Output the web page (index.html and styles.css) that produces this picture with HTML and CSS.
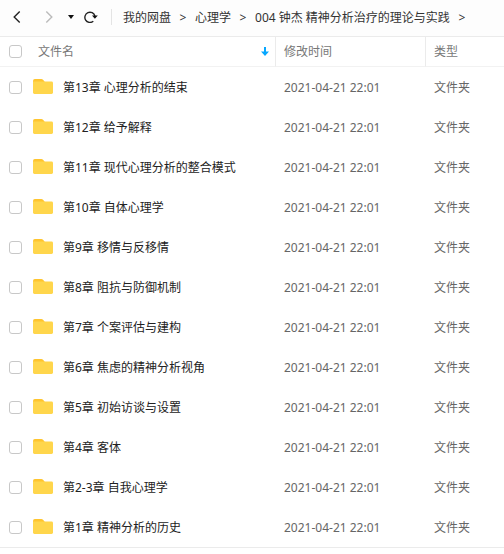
FILE: index.html
```
<!DOCTYPE html>
<html lang="zh-CN">
<head>
    <meta charset="UTF-8">
    <title>我的网盘</title>
    <link rel="stylesheet" href="styles.css">
</head>
<body>

    <!-- shared icons -->
    <svg class="sprite" aria-hidden="true">
        <symbol id="folder" viewBox="0 0 20 16">
            <path fill="#ffc52e" d="M0 2Q0 0 1.8 0H8.4Q9.4 0 10 .8L11.6 2.5V8H0Z"/>
            <path fill="#ffd64c" d="M0 2.5H18.6Q20 2.5 20 3.9V13.6Q20 15 18.6 15H1.4Q0 15 0 13.6Z"/>
        </symbol>
    </svg>

    <header class="toolbar">
        <button class="nav back" aria-label="后退">
            <svg width="8" height="12" viewBox="0 0 8 12"><path d="M6.7 .6L1.2 6L6.7 11.4"/></svg>
        </button>
        <button class="nav forward" aria-label="前进" disabled>
            <svg width="8" height="12" viewBox="0 0 8 12"><path d="M1.3 .6L6.8 6L1.3 11.4"/></svg>
        </button>
        <button class="nav history" aria-label="历史">
            <svg width="6" height="4" viewBox="0 0 6 4"><path d="M0 0H6L3 4Z"/></svg>
        </button>
        <button class="nav refresh" aria-label="刷新">
            <svg width="14" height="12" viewBox="0 0 14 12">
                <path d="M9.3 10.2A5.1 5.1 0 1 1 10.9 5"/>
                <path class="head" d="M8 4.5H13.8L10.9 7.8Z"/>
            </svg>
        </button>
        <nav class="crumbs">
            <a href="#">我的网盘</a><span>&gt;</span>
            <a href="#">心理学</a><span>&gt;</span>
            <a href="#">004 钟杰 精神分析治疗的理论与实践</a><span>&gt;</span>
        </nav>
    </header>

    <table class="files">
        <thead>
            <tr>
                <th class="pick"><input type="checkbox" aria-label="全选"></th>
                <th class="title">
                    <div class="sort">
                        文件名
                        <svg width="8" height="9" viewBox="0 0 8 9"><path d="M3 0H5V4.5H8L4 9L0 4.5H3Z"/></svg>
                    </div>
                </th>
                <th class="time">修改时间</th>
                <th class="type">类型</th>
            </tr>
        </thead>
        <tbody id="list"></tbody>
    </table>

    <script src="script.js"></script>
</body>
</html>
```
FILE: styles.css
```
* {
    box-sizing: border-box;
}

body {
    margin: 0;
    background: #fff;
    color: #333;
    font-family: "Noto Sans", "Noto Sans CJK SC", sans-serif;
    font-size: 12px;
    line-height: 20px;
}

.sprite {
    display: none;
}

.toolbar {
    display: flex;
    align-items: center;
    height: 36px;
    padding: 0 9px 2px;
    background: #fdfdfd;
}

.nav {
    display: flex;
    align-items: center;
    justify-content: center;
    width: 16px;
    height: 20px;
    padding: 0;
    border: 0;
    background: none;
}

.nav svg {
    fill: none;
    stroke: #222;
    stroke-width: 1.4;
}

.nav.forward {
    margin-left: 16px;
}

.nav.forward svg {
    stroke: #bbb;
}

.nav.history {
    margin-left: 6px;
}

.nav.history svg,
.nav .head {
    fill: #111;
    stroke: none;
}

.nav.refresh {
    margin-left: 4px;
}

.crumbs {
    display: flex;
    align-items: center;
    margin-left: 12px;
    padding: 2px 0 0 11px;
    border-left: 1px solid #e4e4e4;
    height: 16px;
    white-space: nowrap;
}

.crumbs a {
    color: #333;
    text-decoration: none;
}

.crumbs span {
    width: 24px;
    text-align: center;
}

.files {
    width: 100%;
    table-layout: fixed;
    border-spacing: 0;
    border-bottom: 1px solid #ebebeb;
    white-space: nowrap;
}

.files th {
    height: 31px;
    padding: 0 8px;
    border-top: 1px solid #ebebeb;
    border-bottom: 1px solid #f2f2f2;
    color: #777;
    font-weight: normal;
    text-align: left;
}

.files td {
    height: 40px;
    padding: 2px 8px 0;
    color: #666;
}

.files .pick {
    width: 30px;
    padding: 0 0 0 9px;
}

.files th.time,
.files th.type {
    border-left: 1px solid #ebebeb;
}

.files .time {
    width: 150px;
}

.files .type {
    width: 79px;
}

.files td.time,
.files td.type {
    padding-left: 9px;
}

.files th.title {
    padding-right: 6px;
}

.files td.title {
    padding-left: 3px;
}

.sort {
    display: flex;
    align-items: center;
    justify-content: space-between;
}

.sort svg {
    fill: #06a7ff;
}

.name {
    display: flex;
    align-items: center;
    gap: 10px;
    color: #222;
}

.name svg {
    width: 20px;
    height: 16px;
    margin-bottom: 2px;
}

input[type="checkbox"] {
    appearance: none;
    display: block;
    width: 13px;
    height: 13px;
    margin: 0;
    border: 1px solid #c8c8c8;
    border-radius: 3px;
    background: #fff;
}

input[type="checkbox"]:checked {
    border-color: #06a7ff;
    background: #06a7ff;
}
```
FILE: script.js
```
const list = document.getElementById('list');

const folders = [
    '第13章 心理分析的结束',
    '第12章 给予解释',
    '第11章 现代心理分析的整合模式',
    '第10章 自体心理学',
    '第9章 移情与反移情',
    '第8章 阻抗与防御机制',
    '第7章 个案评估与建构',
    '第6章 焦虑的精神分析视角',
    '第5章 初始访谈与设置',
    '第4章 客体',
    '第2-3章 自我心理学',
    '第1章 精神分析的历史'
];

folders.forEach(function (name, i) {
    let row = document.createElement('tr');
    row.innerHTML =
        '<td class="pick"><input type="checkbox" id="f' + i + '"></td>' +
        '<td class="title"><label class="name" for="f' + i + '">' +
        '<svg><use href="#folder"/></svg>' + name + '</label></td>' +
        '<td class="time">2021-04-21 22:01</td>' +
        '<td class="type">文件夹</td>';
    list.appendChild(row);
});
```
